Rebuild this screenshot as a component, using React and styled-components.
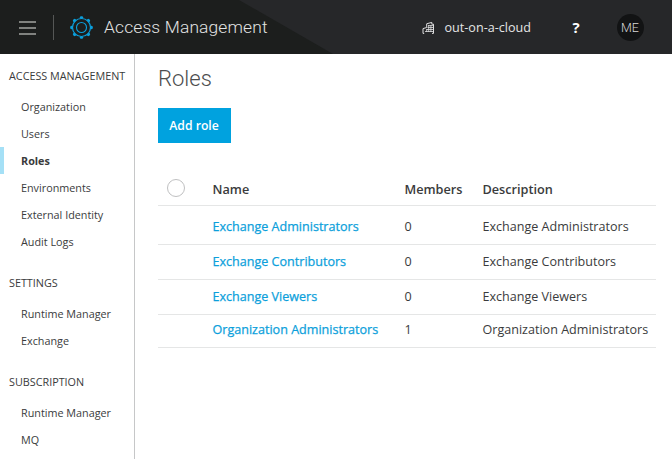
import React from 'react';
import styled, { createGlobalStyle } from 'styled-components';

const GlobalStyle = createGlobalStyle`
  * { box-sizing: border-box; }
  body { margin: 0; background: #fff; color: #3a3b3c; font-family: "Open Sans", sans-serif; overflow: hidden; }
  #root { height: 100vh; }
`;

const Page = styled.div`
  display: flex;
  flex-direction: column;
  height: 459px;
  width: 672px;
`;

const Header = styled.header`
  flex: none;
  display: flex;
  align-items: center;
  height: 54px;
  padding: 0 28px 0 19px;
  background: #262729;
  position: relative;
  isolation: isolate;

  &::before {
    content: '';
    position: absolute;
    inset: 0 auto 0 0;
    width: 333px;
    z-index: -1;
    background: #1c1e1d;
    clip-path: polygon(0 0, 239px 0, 333px 100%, 0 100%);
  }
`;

const MenuButton = styled.button`
  display: flex;
  flex-direction: column;
  justify-content: space-between;
  width: 17px;
  height: 14px;
  margin: 1px 0 0;
  padding: 0;
  border: 0;
  background: none;
`;

const MenuBar = styled.span`
  height: 2px;
  background: #80827f;
`;

const Divider = styled.span`
  width: 1px;
  height: 25px;
  margin: 0 16px 0 17px;
  background: #555756;
`;

const AppTitle = styled.span`
  margin-left: 10px;
  font: 300 17.4px/24px Roboto, sans-serif;
  letter-spacing: 0.15px;
  color: #e3e4e3;
`;

const OrgSwitcher = styled.div`
  display: flex;
  align-items: center;
  gap: 10px;
  margin: 1px 0 0 auto;
  font-size: 12.6px;
  line-height: 18px;
  color: #e4e5e5;
`;

const Help = styled.span`
  width: 10px;
  margin: 0 36px 0 40px;
  font-size: 15px;
  font-weight: 700;
  line-height: 20px;
  text-align: center;
  color: #fff;
`;

const Avatar = styled.span`
  width: 27px;
  height: 27px;
  border-radius: 50%;
  background: #121314;
  font: 300 12.5px/27px Roboto, sans-serif;
  text-align: center;
  text-indent: -1px;
  color: #d8d8d8;
`;

const Body = styled.div`
  display: flex;
  flex: 1;
  min-height: 0;
`;

const Sidebar = styled.nav`
  flex: none;
  width: 135px;
  padding-top: 12px;
  border-right: 1px solid #c6c7c8;
`;

const Section = styled.section`
  margin-bottom: 18px;
`;

const SectionTitle = styled.h2`
  margin: 0 0 7px;
  padding-left: 9px;
  font-size: 10.8px;
  font-weight: 400;
  line-height: 20px;
  white-space: nowrap;
`;

const NavItem = styled.a`
  display: block;
  height: 27px;
  padding-left: 17px;
  border-left: 4px solid ${(p) => (p.$active ? '#a5e0f6' : 'transparent')};
  font-size: 10.8px;
  font-weight: ${(p) => (p.$active ? 700 : 400)};
  line-height: 27px;
  white-space: nowrap;
`;

const Main = styled.main`
  flex: 1;
  padding: 10px 16px 0 23px;
`;

const PageTitle = styled.h1`
  margin: 0;
  font: 300 22px/30px Roboto, sans-serif;
  color: #4c4d4e;
`;

const AddButton = styled.button`
  display: block;
  width: 73px;
  height: 35px;
  margin: 14px 0 27px;
  padding: 0;
  border: 0;
  background: #00a2df;
  color: #fff;
  font: 600 12.2px/35px "Open Sans", sans-serif;
  text-indent: -1px;
`;

const Row = styled.div`
  display: grid;
  grid-template-columns: 54.5px 192px 78px 1fr;
  align-items: center;
  width: 498px;
  height: ${(p) => p.$height}px;
  padding-top: ${(p) => p.$top || 0}px;
  padding-bottom: ${(p) => p.$bottom || 0}px;
  border-bottom: 1px solid #e5e6e6;
  font-size: 12.57px;
  line-height: 18px;
  white-space: nowrap;
`;

const HeadCell = styled.span`
  font-size: 12.7px;
  font-weight: 600;
`;

const RoleLink = styled.a`
  -webkit-text-stroke: 0.25px currentColor;
  color: #0c9fdb;
`;

const SelectAll = styled.span`
  width: 18px;
  height: 18px;
  margin: -1px 0 0 9px;
  border: 1px solid #bfc0c1;
  border-radius: 50%;
`;

const GearIcon = () => (
  <svg width="24" height="24" viewBox="-11.5 -12.5 24 24" fill="none" stroke="#0b9fdc">
    <circle r="9" strokeWidth="1.2" />
    <circle r="5" strokeWidth="1.1" />
    {[0, 45, 90, 135, 180, 225, 270, 315].map((a) => (
      <path key={a} d="M-2-9.4L-1-11.3H1L2-9.4L0-8.4Z" fill="#0b9fdc" stroke="none" transform={`rotate(${a})`} />
    ))}
  </svg>
);

const BuildingIcon = () => (
  <svg width="13" height="14" viewBox="0 0 13 14" fill="none" stroke="#dededf">
    <path d="M4.7 6.5V2.8L9.8 1.4V3.2H11.5V12.4H10M4.7 6.5L1 7.6V12.4H2.2" />
    <path d="M6 4.6H11M5.5 6.5H11M4.5 8.5H11M3 10.5H11M6.7 4V11M8.9 4V11M4.7 8V11" strokeWidth=".8" />
  </svg>
);

const sections = [
  { title: 'ACCESS MANAGEMENT', items: ['Organization', 'Users', 'Roles', 'Environments', 'External Identity', 'Audit Logs'] },
  { title: 'SETTINGS', items: ['Runtime Manager', 'Exchange'] },
  { title: 'SUBSCRIPTION', items: ['Runtime Manager', 'MQ'] },
];

const roles = [
  { name: 'Exchange Administrators', members: 0, height: 39, top: 4 },
  { name: 'Exchange Contributors', members: 0, height: 35 },
  { name: 'Exchange Viewers', members: 0, height: 35 },
  { name: 'Organization Administrators', members: 1, height: 33, bottom: 2 },
];

export default function App() {
  return (
    <Page>
      <GlobalStyle />
      <Header>
        <MenuButton aria-label="Menu">
          <MenuBar />
          <MenuBar />
          <MenuBar />
        </MenuButton>
        <Divider />
        <GearIcon />
        <AppTitle>Access Management</AppTitle>
        <OrgSwitcher>
          <BuildingIcon />
          out-on-a-cloud
        </OrgSwitcher>
        <Help>?</Help>
        <Avatar>ME</Avatar>
      </Header>
      <Body>
        <Sidebar>
          {sections.map((s) => (
            <Section key={s.title}>
              <SectionTitle>{s.title}</SectionTitle>
              {s.items.map((item) => (
                <NavItem key={item} $active={item === 'Roles'}>{item}</NavItem>
              ))}
            </Section>
          ))}
        </Sidebar>
        <Main>
          <PageTitle>Roles</PageTitle>
          <AddButton>Add role</AddButton>
          <Row $height={36} $top={2}>
            <SelectAll />
            <HeadCell>Name</HeadCell>
            <HeadCell>Members</HeadCell>
            <HeadCell>Description</HeadCell>
          </Row>
          {roles.map((r) => (
            <Row key={r.name} $height={r.height} $top={r.top} $bottom={r.bottom}>
              <span />
              <RoleLink>{r.name}</RoleLink>
              <span>{r.members}</span>
              <span>{r.name}</span>
            </Row>
          ))}
        </Main>
      </Body>
    </Page>
  );
}
